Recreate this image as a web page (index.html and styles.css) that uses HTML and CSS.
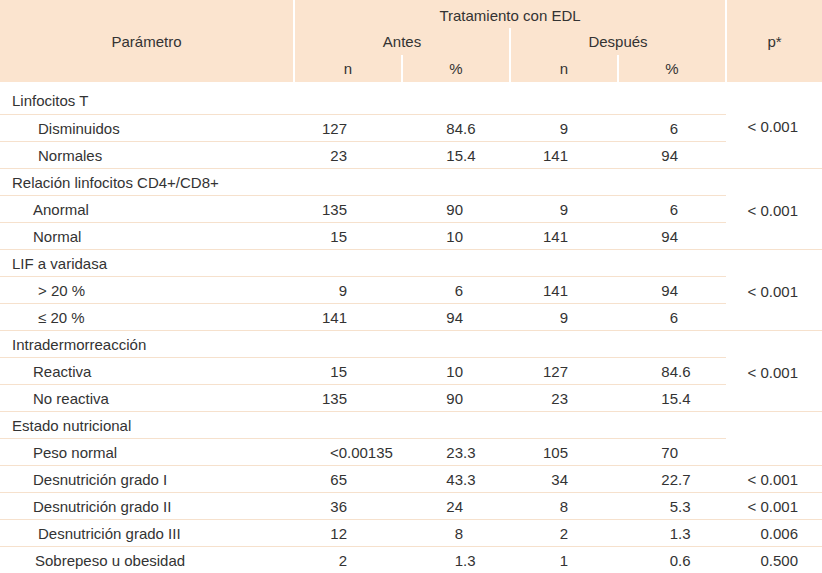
FILE: index.html
```html
<!DOCTYPE html>
<html lang="es">
<head>
<meta charset="utf-8">
<title>Tratamiento con EDL</title>
<link rel="stylesheet" href="styles.css">
</head>
<body>
<table class="tbl">
  <colgroup>
    <col class="w-label"><col class="w-num"><col class="w-num"><col class="w-num"><col class="w-num"><col class="w-p">
  </colgroup>
  <thead>
    <tr class="h1">
      <th rowspan="3" class="first-col">Parámetro</th>
      <th colspan="4" class="top">Tratamiento con EDL</th>
      <th rowspan="3" class="last-col">p*</th>
    </tr>
    <tr class="h2">
      <th colspan="2">Antes</th>
      <th colspan="2">Después</th>
    </tr>
    <tr class="h3">
      <th>n</th><th>%</th><th>n</th><th>%</th>
    </tr>
  </thead>
  <tbody>
    <tr class="first">
      <td class="grp">Linfocitos T</td><td></td><td></td><td></td><td></td>
      <td rowspan="3" class="p p-span">&lt; 0.001</td>
    </tr>
    <tr>
      <td class="sub sub-l">Disminuidos</td>
      <td class="an"><span class="int">127</span></td>
      <td class="ap"><span class="int">84</span>.6</td>
      <td class="dn"><span class="int">9</span></td>
      <td class="dp"><span class="int">6</span></td>
    </tr>
    <tr>
      <td class="sub sub-l">Normales</td>
      <td class="an"><span class="int">23</span></td>
      <td class="ap"><span class="int">15</span>.4</td>
      <td class="dn"><span class="int">141</span></td>
      <td class="dp"><span class="int">94</span></td>
    </tr>

    <tr>
      <td class="grp">Relación linfocitos CD4+/CD8+</td><td></td><td></td><td></td><td></td>
      <td rowspan="3" class="p p-span">&lt; 0.001</td>
    </tr>
    <tr>
      <td class="sub">Anormal</td>
      <td class="an"><span class="int">135</span></td>
      <td class="ap"><span class="int">90</span></td>
      <td class="dn"><span class="int">9</span></td>
      <td class="dp"><span class="int">6</span></td>
    </tr>
    <tr>
      <td class="sub">Normal</td>
      <td class="an"><span class="int">15</span></td>
      <td class="ap"><span class="int">10</span></td>
      <td class="dn"><span class="int">141</span></td>
      <td class="dp"><span class="int">94</span></td>
    </tr>

    <tr>
      <td class="grp">LIF a varidasa</td><td></td><td></td><td></td><td></td>
      <td rowspan="3" class="p p-span">&lt; 0.001</td>
    </tr>
    <tr>
      <td class="sub sub-l">&gt; 20 %</td>
      <td class="an"><span class="int">9</span></td>
      <td class="ap"><span class="int">6</span></td>
      <td class="dn"><span class="int">141</span></td>
      <td class="dp"><span class="int">94</span></td>
    </tr>
    <tr>
      <td class="sub sub-l">≤ 20 %</td>
      <td class="an"><span class="int">141</span></td>
      <td class="ap"><span class="int">94</span></td>
      <td class="dn"><span class="int">9</span></td>
      <td class="dp"><span class="int">6</span></td>
    </tr>

    <tr>
      <td class="grp">Intradermorreacción</td><td></td><td></td><td></td><td></td>
      <td rowspan="3" class="p p-span">&lt; 0.001</td>
    </tr>
    <tr>
      <td class="sub">Reactiva</td>
      <td class="an"><span class="int">15</span></td>
      <td class="ap"><span class="int">10</span></td>
      <td class="dn"><span class="int">127</span></td>
      <td class="dp"><span class="int">84</span>.6</td>
    </tr>
    <tr>
      <td class="sub">No reactiva</td>
      <td class="an"><span class="int">135</span></td>
      <td class="ap"><span class="int">90</span></td>
      <td class="dn"><span class="int">23</span></td>
      <td class="dp"><span class="int">15</span>.4</td>
    </tr>

    <tr>
      <td class="grp">Estado nutricional</td><td></td><td></td><td></td><td></td>
      <td rowspan="2" class="p"></td>
    </tr>
    <tr>
      <td class="sub">Peso normal</td>
      <td class="an"><span class="int">&lt;0</span>.00135</td>
      <td class="ap"><span class="int">23</span>.3</td>
      <td class="dn"><span class="int">105</span></td>
      <td class="dp"><span class="int">70</span></td>
    </tr>
    <tr>
      <td class="sub">Desnutrición grado I</td>
      <td class="an"><span class="int">65</span></td>
      <td class="ap"><span class="int">43</span>.3</td>
      <td class="dn"><span class="int">34</span></td>
      <td class="dp"><span class="int">22</span>.7</td>
      <td class="p">&lt; 0.001</td>
    </tr>
    <tr>
      <td class="sub">Desnutrición grado II</td>
      <td class="an"><span class="int">36</span></td>
      <td class="ap"><span class="int">24</span></td>
      <td class="dn"><span class="int">8</span></td>
      <td class="dp"><span class="int">5</span>.3</td>
      <td class="p">&lt; 0.001</td>
    </tr>
    <tr>
      <td class="sub sub-xl">Desnutrición grado III</td>
      <td class="an"><span class="int">12</span></td>
      <td class="ap"><span class="int">8</span></td>
      <td class="dn"><span class="int">2</span></td>
      <td class="dp"><span class="int">1</span>.3</td>
      <td class="p">0.006</td>
    </tr>
    <tr class="last">
      <td class="sub sub-m">Sobrepeso u obesidad</td>
      <td class="an"><span class="int">2</span></td>
      <td class="ap"><span class="int">1</span>.3</td>
      <td class="dn"><span class="int">1</span></td>
      <td class="dp"><span class="int">0</span>.6</td>
      <td class="p">0.500</td>
    </tr>
  </tbody>
</table>
</body>
</html>
```

FILE: styles.css
```css
html, body {
  margin: 0;
  padding: 0;
  background: #ffffff;
}

body {
  font-family: "Liberation Sans", Arial, sans-serif;
  font-size: 15px;
  color: #333333;
}

.tbl {
  width: 822px;
  table-layout: fixed;
  border-collapse: collapse;
}

.w-label { width: 294px; }
.w-num { width: 108px; }
.w-p { width: 96px; }

.tbl th {
  background: #fbe4cf;
  font-weight: normal;
  text-align: center;
  padding: 0;
  border-left: 2px solid #ffffff;
  border-right: 2px solid #ffffff;
  border-top: 0;
  border-bottom: 0;
}

.tbl th.top { padding-top: 2px; }
.tbl th.first-col { border-left: 0; }
.tbl th.last-col { border-right: 0; }

.h1 { height: 28px; }
.h2 { height: 27px; }
.h3 { height: 27px; }

.tbl td {
  padding: 0;
  height: 26px;
  border-bottom: 1px solid #f6e1cd;
  white-space: nowrap;
  vertical-align: middle;
}

.tbl tr.first td { height: 28px; padding-top: 4px; }
.tbl tr.last td { border-bottom: 0; }

.tbl td.p {
  text-align: right;
  padding-right: 24px;
}

.tbl tr.first td.p-span,
.tbl td.p-span {
  padding-top: 3px;
}

.grp { padding-left: 12px !important; }
.sub { padding-left: 33px !important; }
.sub-l { padding-left: 38px !important; }
.sub-xl { padding-left: 38px !important; }
.sub-m { padding-left: 35px !important; }

.int {
  display: inline-block;
  width: 40px;
  text-align: right;
}

.tbl td.an { padding-left: 13px; }
.tbl td.ap { padding-left: 21px; }
.tbl td.dn { padding-left: 18px; }
.tbl td.dp { padding-left: 20px; }
```
